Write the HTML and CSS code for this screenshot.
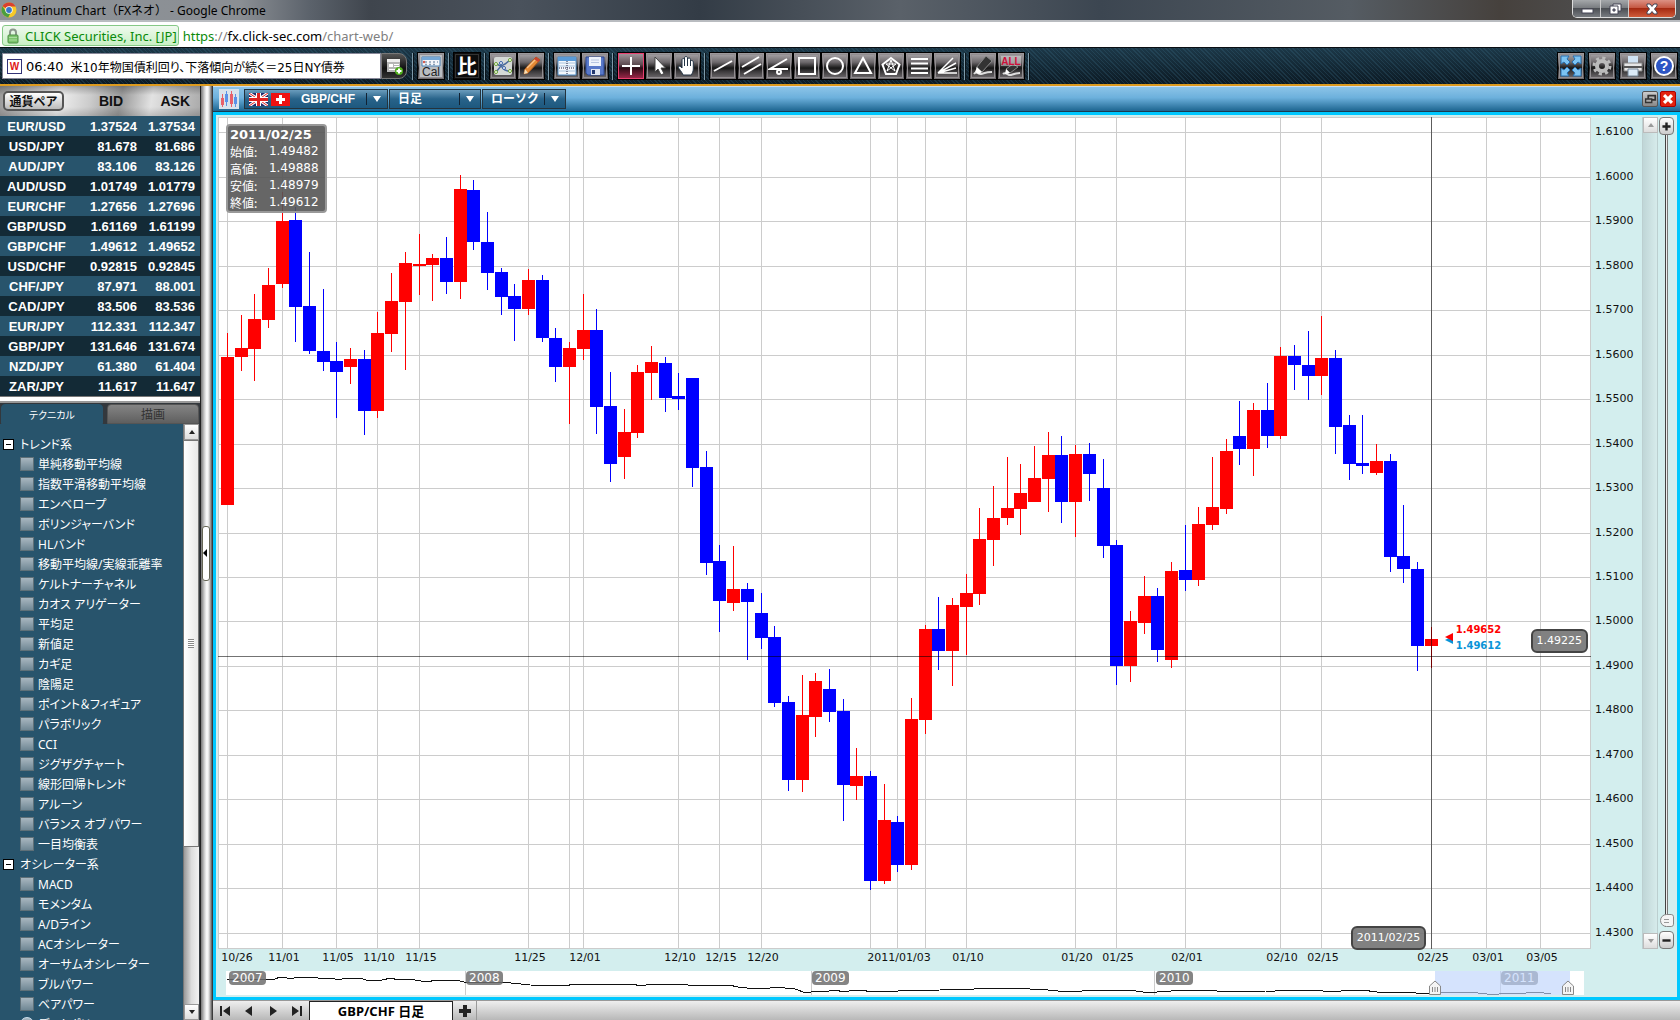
FILE: index.html
```html
<!DOCTYPE html>
<html lang="ja">
<head>
    <meta charset="UTF-8">
    <meta name="viewport" content="width=device-width, initial-scale=1.0">
    <title>Platinum Chart（FXネオ）</title>
    <link rel="stylesheet" href="styles.css">
</head>
<body>
    <header class="titlebar">
        <svg class="logo" viewBox="0 0 16 16">
            <circle cx="8" cy="8" r="7.5" fill="#f6c928"/>
            <path d="M8 8 1.500 4.200A7.500 7.500 0 0 1 14.700 4.600L8 4.500z" fill="#d9402f"/>
            <path d="M1.500 4.200A7.500 7.500 0 0 0 7.200 15.400L9.500 11 5 9.500z" fill="#4a9e3f"/>
            <circle cx="8" cy="8" r="3.700" fill="#fff"/>
            <circle cx="8" cy="8" r="2.900" fill="#3a78c8"/>
        </svg>
        <h1 class="title">Platinum Chart（FXネオ） - Google Chrome</h1>
        <div class="window-buttons">
            <button aria-label="最小化"><svg viewBox="0 0 14 12"><rect x="2" y="6" width="11" height="4" fill="#fff" stroke="#445"/></svg></button>
            <button aria-label="元に戻す"><svg viewBox="0 0 14 12"><path d="M5 1h8v7h-8z" fill="#fff" stroke="#445"/><path d="M2 3h8v8H2z" fill="#fff" stroke="#445"/><path d="M5 6h2v2H5z" fill="#889" stroke="#445"/></svg></button>
            <button class="win-close" aria-label="閉じる"><svg viewBox="0 0 14 12"><path d="M2 1h3l2 2.500L9 1h3v2L9.500 6 12 9v2H9L7 8.500 5 11H2V9l2.500-3L2 3z" fill="#fff" stroke="#445"/></svg></button>
        </div>
    </header>

    <div class="address">
        <span class="cert">
            <svg viewBox="0 0 12 16"><path d="M3 8V4.500a3 3 0 0 1 6 0V8" fill="none" stroke="#8b978b" stroke-width="2"/><rect x="1" y="7" width="10" height="8" rx="1" fill="#7cc46c" stroke="#4d8f45"/><path d="M2 9.500h8M2 12h8" stroke="#a9dd9e"/></svg>
            CLICK Securities, Inc. [JP]
        </span>
        <span class="url"><span class="scheme">https</span>://<b>fx.click-sec.com</b>/chart-web/</span>
    </div>

    <div class="toolbar">
        <a class="news" href="#"><span class="news-mark">W</span><span class="news-time">06:40</span><span class="news-text">米10年物国債利回り、下落傾向が続く＝25日NY債券</span></a>
        <button class="news-more" aria-label="ニュース一覧">
            <svg viewBox="0 0 20 20"><path d="M3 3h13v13H3z" fill="#b5b5b5"/><path d="M3 3h13v3H3z" fill="#eee"/><path d="M5 8h4v3H5z" fill="#fff"/><path d="M10 8.500h5M10 10.500h5M5 13.500h6" stroke="#fff"/><circle cx="15" cy="15" r="4" fill="#4fae1c"/><path d="M12.500 15h5M15 12.500v5" stroke="#fff" stroke-width="2"/></svg>
        </button>
        <i class="sep sep-first"></i>
        <button class="tool" aria-label="カレンダー"><svg viewBox="0 0 24 24"><rect x="1" y="1" width="22" height="22" fill="#b9bdc1"/><path d="M3 3h18v9H3z" fill="#f5f7fa" stroke="#4d82b5"/><path d="M3 3h18v3H3z" fill="#76a8d6"/><path d="M6 8h2M10 8h2M14 8h2M18 8h1M6 10.500h2M10 10.500h2M14 10.500h2" stroke="#8a9fb5" stroke-width="1.500"/><circle cx="5" cy="8" r="1.200" fill="#d65b4c"/><text x="3" y="22" class="cal-text">Cal</text></svg></button>
        <i class="sep"></i>
        <button class="tool tool-hi" aria-label="比較">比</button>
        <i class="sep"></i>
        <button class="tool" aria-label="インジケーター"><svg viewBox="0 0 24 24"><rect x="3" y="3" width="18" height="18" rx="2" fill="#d5d9d6"/><path d="M5 10l5 2 4 4 6 2M5 18l5-6 4-2 5-4" fill="none" stroke="#4b6b9c" stroke-width="1.500"/><g fill="#fff" stroke="#6aa22c"><circle cx="5" cy="10" r="1.500"/><circle cx="19" cy="6" r="1.500"/><circle cx="5" cy="18" r="1.500"/><circle cx="19" cy="17" r="1.500"/></g><g fill="#fff" stroke="#3460a8"><circle cx="10" cy="9" r="1.500"/><circle cx="13" cy="14" r="1.500"/></g></svg></button>
        <button class="tool" aria-label="鉛筆"><svg viewBox="0 0 24 24"><path d="M17 3l4 3-12 13-4 1 1-5z" fill="#e58a35" stroke="#a9591d"/><path d="M8 14L17 5" stroke="#f9c48a" stroke-width="1.500"/><path d="M17 3l4 3-2 2-4-3z" fill="#c94432"/><path d="M6 15l3 4-4 1z" fill="#f4dfb8"/></svg></button>
        <i class="sep"></i>
        <button class="tool" aria-label="レイアウト"><svg viewBox="0 0 24 24"><path d="M3 3h18v18H3z" fill="#f3f7fb" stroke="#4b8ac4"/><path d="M3 3h18v4H3z" fill="#5a9bd8"/><path d="M3 9h18M3 12h18M3 17h18" stroke="#a9c4de"/><path d="M12 7v14M4 14h16" stroke="#224" stroke-dasharray="1 1"/></svg></button>
        <button class="tool" aria-label="保存"><svg viewBox="0 0 24 24"><path d="M3 3h18v18H5l-2-2z" fill="#5878c8" stroke="#2e4a96"/><path d="M6 3h12v9H6z" fill="#eef3fb"/><path d="M8 6h8M8 8.500h8" stroke="#b7c6e2"/><path d="M8 15h9v6H8z" fill="#dfe5f1"/><path d="M9 16h3v4H9z" fill="#23386f"/></svg></button>
        <i class="sep"></i>
        <button class="tool active" aria-label="十字カーソル"><svg viewBox="0 0 24 24"><path d="M12 3v18M3 12h18" stroke="#fff" stroke-width="2"/></svg></button>
        <button class="tool" aria-label="選択"><svg viewBox="0 0 24 24"><path d="M8 3v15l3-3 3 6 3-1.500-3-5.500h4.500z" fill="#fff" stroke="#444"/></svg></button>
        <button class="tool" aria-label="移動"><svg viewBox="0 0 24 24"><path d="M8 21c-1-3-4-6-5-8 1-1.500 2.500-1 4 1V6c0-2 2.500-2 2.500 0V4c0-2 3-2 3 0v1c.5-1.500 3-1.500 3 .5V7c1-1 2.800-.5 2.800 1v7c0 3-1.300 4-1.800 6z" fill="#fff" stroke="#234"/><path d="M9.500 6v6M12.500 5v7M15.500 7v5" stroke="#234"/></svg></button>
        <i class="sep"></i>
        <button class="tool" aria-label="直線"><svg class="line" viewBox="0 0 24 24"><path d="M3 17L21 7"/></svg></button>
        <button class="tool" aria-label="平行線"><svg class="line" viewBox="0 0 24 24"><path d="M3 13L20 3M5 20L22 10"/></svg></button>
        <button class="tool" aria-label="角度線"><svg class="line" viewBox="0 0 24 24"><path d="M20 5L3 15h18"/><circle cx="12" cy="18" r="2"/></svg></button>
        <button class="tool" aria-label="四角形"><svg class="line" viewBox="0 0 24 24"><rect x="4" y="4" width="16" height="16"/></svg></button>
        <button class="tool" aria-label="円"><svg class="line" viewBox="0 0 24 24"><circle cx="12" cy="12" r="8"/></svg></button>
        <button class="tool" aria-label="三角形"><svg class="line" viewBox="0 0 24 24"><path d="M12 4l8 15H4z"/></svg></button>
        <button class="tool" aria-label="五角形"><svg class="line thin" viewBox="0 0 24 24"><path d="M12 4l8.500 6.500-3.500 9.500H7L3.500 10.500z" stroke-width="2"/><path d="M12 6l4 11-9-7h10l-9 7z"/></svg></button>
        <button class="tool" aria-label="リトレースメント"><svg class="line" viewBox="0 0 24 24"><path d="M4 5h17M4 9.500h17M4 14.500h17M4 19h17"/></svg></button>
        <button class="tool" aria-label="ファン"><svg class="line thin" viewBox="0 0 24 24"><path d="M3 19L18 4M3 19l18-10M3 19l18-5M3 19h19" stroke-width="1.500"/></svg></button>
        <i class="sep"></i>
        <button class="tool" aria-label="消しゴム"><svg viewBox="0 0 24 24"><path d="M3 20c3-4 4 1 7 0 4-1 5-2 11-2" fill="none" stroke="#ddd" stroke-width="2"/><path d="M15 2l6 5-10 11-6-4z" fill="#333" stroke="#888"/><path d="M6 13l5 5-3 2-4-2z" fill="#fff"/></svg></button>
        <button class="tool" aria-label="すべて消去"><svg viewBox="0 0 24 24"><path d="M4 20c3-3 5 2 8 1 4-1 5-2 9-2" fill="none" stroke="#ddd" stroke-width="2"/><path d="M14 10l5 3-8 6-4-4z" fill="#333" stroke="#888"/><path d="M7 15l4 4-5 1z" fill="#fff"/><rect x="2" y="2" width="20" height="10" fill="#ddd" opacity=".5"/><text x="12" y="11" class="all-text">ALL</text></svg></button>
        <i class="sep"></i>
        <div class="toolbar-right">
            <button class="tool" aria-label="全画面"><svg viewBox="0 0 24 24"><g fill="#7cc3f2" stroke="#2a70ae"><path d="M2 2h8L8 5l3 3-3 3-3-3-3 2z"/><path d="M22 2h-8l2 3-3 3 3 3 3-3 3 2z"/><path d="M2 22h8l-2-3 3-3-3-3-3 3-3-2z"/><path d="M22 22h-8l2-3-3-3 3-3 3 3 3-2z"/></g></svg></button>
            <button class="tool" aria-label="設定"><svg viewBox="0 0 24 24"><circle cx="12" cy="12" r="8" fill="none" stroke="#bbb" stroke-width="3" stroke-dasharray="3.140 3.140"/><circle cx="12" cy="12" r="5" fill="none" stroke="#bbb" stroke-width="4"/></svg></button>
            <button class="tool" aria-label="印刷"><svg viewBox="0 0 24 24"><path d="M7 2h10v8H7z" fill="#cfe3f5"/><path d="M3 9h18v8H3z" fill="#e6e6e6" stroke="#888"/><path d="M3 13h18" stroke="#555" stroke-width="2"/><path d="M7 15h10v7H7z" fill="#dcebf8" stroke="#789"/></svg></button>
            <button class="tool" aria-label="ヘルプ"><svg viewBox="0 0 24 24"><circle cx="12" cy="12" r="9" fill="#2d55c4" stroke="#fff" stroke-width="2"/><text x="12" y="17" class="help-text">?</text></svg></button>
        </div>
    </div>

    <main class="main">
        <aside class="sidebar">
            <table class="rates">
                <thead>
                    <tr><th><button class="pair-btn">通貨ペア</button></th><th>BID</th><th>ASK</th></tr>
                </thead>
                <tbody>
                    <tr><td>EUR/USD</td><td>1.37524</td><td>1.37534</td></tr>
                    <tr><td>USD/JPY</td><td>81.678</td><td>81.686</td></tr>
                    <tr><td>AUD/JPY</td><td>83.106</td><td>83.126</td></tr>
                    <tr><td>AUD/USD</td><td>1.01749</td><td>1.01779</td></tr>
                    <tr><td>EUR/CHF</td><td>1.27656</td><td>1.27696</td></tr>
                    <tr><td>GBP/USD</td><td>1.61169</td><td>1.61199</td></tr>
                    <tr><td>GBP/CHF</td><td>1.49612</td><td>1.49652</td></tr>
                    <tr><td>USD/CHF</td><td>0.92815</td><td>0.92845</td></tr>
                    <tr><td>CHF/JPY</td><td>87.971</td><td>88.001</td></tr>
                    <tr><td>CAD/JPY</td><td>83.506</td><td>83.536</td></tr>
                    <tr><td>EUR/JPY</td><td>112.331</td><td>112.347</td></tr>
                    <tr><td>GBP/JPY</td><td>131.646</td><td>131.674</td></tr>
                    <tr><td>NZD/JPY</td><td>61.380</td><td>61.404</td></tr>
                    <tr><td>ZAR/JPY</td><td>11.617</td><td>11.647</td></tr>
                </tbody>
            </table>
            <div class="divider"></div>
            <div class="side-tabs">
                <button class="side-tab selected">テクニカル</button>
                <button class="side-tab">描画</button>
            </div>
            <div class="tree">
                <div class="tree-list">
                    <div class="group"><button class="fold" aria-label="折りたたむ"></button>トレンド系</div>
                    <label><input type="checkbox">単純移動平均線</label>
                    <label><input type="checkbox">指数平滑移動平均線</label>
                    <label><input type="checkbox">エンベロープ</label>
                    <label><input type="checkbox">ボリンジャーバンド</label>
                    <label><input type="checkbox">HLバンド</label>
                    <label><input type="checkbox">移動平均線/実線乖離率</label>
                    <label><input type="checkbox">ケルトナーチャネル</label>
                    <label><input type="checkbox">カオス アリゲーター</label>
                    <label><input type="checkbox">平均足</label>
                    <label><input type="checkbox">新値足</label>
                    <label><input type="checkbox">カギ足</label>
                    <label><input type="checkbox">陰陽足</label>
                    <label><input type="checkbox">ポイント＆フィギュア</label>
                    <label><input type="checkbox">パラボリック</label>
                    <label><input type="checkbox">CCI</label>
                    <label><input type="checkbox">ジグザグチャート</label>
                    <label><input type="checkbox">線形回帰トレンド</label>
                    <label><input type="checkbox">アルーン</label>
                    <label><input type="checkbox">バランス オブ パワー</label>
                    <label><input type="checkbox">一目均衡表</label>
                    <div class="group"><button class="fold" aria-label="折りたたむ"></button>オシレーター系</div>
                    <label><input type="checkbox">MACD</label>
                    <label><input type="checkbox">モメンタム</label>
                    <label><input type="checkbox">A/Dライン</label>
                    <label><input type="checkbox">ACオシレーター</label>
                    <label><input type="checkbox">オーサムオシレーター</label>
                    <label><input type="checkbox">ブルパワー</label>
                    <label><input type="checkbox">ベアパワー</label>
                    <label class="orb-row"><input type="checkbox">ディナポリ</label>
                </div>
                <div class="scroll">
                    <button class="scroll-btn up" aria-label="上へ"></button>
                    <div class="scroll-thumb"><i></i></div>
                    <div class="scroll-track"></div>
                    <button class="scroll-btn down" aria-label="下へ"></button>
                </div>
            </div>
        </aside>

        <div class="splitter"><button class="splitter-btn" aria-label="サイドバーを隠す"></button></div>

        <section class="chart-panel">
            <div class="chart-head">
                <svg class="candle-icon" viewBox="0 0 20 20"><rect width="20" height="20" fill="#d9e3ec"/><g fill="#e8606a"><path d="M2 9h3v7H2zM3 5h1v13H3zM11 5h3v10h-3zM12 2h1v16h-1z"/></g><g fill="#5a92e8"><path d="M6 5h3v8H6zM7 2h1v15H7zM15 8h3v7h-3zM16 5h1v13h-1z"/></g></svg>
                <div class="combo pair">
                    <svg class="flag" viewBox="0 0 19 13"><path fill="#1f2a6b" d="M0 0h19v13H0z"/><path d="M0 0l19 13M19 0L0 13" stroke="#fff" stroke-width="3"/><path d="M0 0l19 13M19 0L0 13" stroke="#d22"/><path d="M9.500 0v13M0 6.500h19" stroke="#fff" stroke-width="5"/><path d="M9.500 0v13M0 6.500h19" stroke="#d22" stroke-width="3"/></svg>
                    <svg class="flag" viewBox="0 0 19 13"><path fill="#e11" d="M0 0h19v13H0z"/><path d="M9.500 2v9M5 6.500h9" stroke="#fff" stroke-width="3"/></svg>
                    <select aria-label="通貨ペア"><option>GBP/CHF</option></select>
                </div>
                <div class="combo term"><select aria-label="足種"><option>日足</option></select></div>
                <div class="combo style"><select aria-label="チャート形式"><option>ローソク</option></select></div>
                <div class="panel-buttons">
                    <button class="restore" aria-label="元のサイズ"><svg viewBox="0 0 16 16"><path d="M6 4h8v5H6z" fill="none" stroke="#333" stroke-width="2"/><path d="M3 8h7v4H3z" fill="#aaa" stroke="#333" stroke-width="1.500"/></svg></button>
                    <button class="close" aria-label="チャートを閉じる"><svg viewBox="0 0 16 16"><path d="M3.500 3.500l9 9M12.500 3.500l-9 9" stroke="#fff" stroke-width="3.500"/></svg></button>
                </div>
            </div>

            <div class="chart-body">
                <div class="plot">
                    <svg id="chart" class="chart-svg" viewBox="218 117 1373 832" preserveAspectRatio="none"></svg>
                    <dl class="ohlc">
                        <dt class="ohlc-date">2011/02/25</dt>
                        <dt>始値:</dt><dd>1.49482</dd>
                        <dt>高値:</dt><dd>1.49888</dd>
                        <dt>安値:</dt><dd>1.48979</dd>
                        <dt>終値:</dt><dd>1.49612</dd>
                    </dl>
                    <div class="last-price"><span class="ask">1.49652</span><span class="bid">1.49612</span></div>
                    <span class="badge price-badge">1.49225</span>
                    <span class="badge date-badge">2011/02/25</span>
                </div>
                <div id="yAxis" class="y-axis"></div>
                <div class="scroll light">
                    <button class="scroll-btn up" aria-label="上へ"></button>
                    <div class="scroll-track"></div>
                    <button class="scroll-btn down" aria-label="下へ"></button>
                </div>
                <div class="zoom">
                    <button class="zoom-btn" aria-label="拡大"><svg viewBox="0 0 16 16"><path d="M8 3v10M3 8h10" stroke="#222" stroke-width="3"/></svg></button>
                    <input type="range" min="0" max="100" value="0" aria-label="ズーム">
                    <button class="zoom-btn" aria-label="縮小"><svg viewBox="0 0 16 16"><path d="M3 8h10" stroke="#222" stroke-width="3"/></svg></button>
                </div>
                <div id="xAxis" class="x-axis"></div>
                <div id="overview" class="overview">
                    <svg class="overview-svg" viewBox="226 971 1358 24" preserveAspectRatio="none">
                        <path d="M465.500 971v24M811.500 971v24M1154.500 971v24M1500.500 971v24" stroke="#ccc" fill="none"/>
                        <polyline class="history" points="227,979 275,979 280,977 287,978 294,978 311,977 318,978 332,978 338,980 346,978 363,979 366,980 382,980 391,978 398,980 403,979 410,979 415,980 427,982 436,980 460,981 464,982 493,983 502,982 530,985 566,986 573,984 587,984 596,985 611,984 625,985 632,984 641,986 651,984 681,984 695,986 724,985 729,985 738,987 747,988 762,989 778,987 785,988 795,989 806,993 816,991 823,992 835,990 844,992 854,990 861,990 872,992 882,991 889,992 898,991 940,990 968,989 974,989 978,988 994,989 1011,988 1048,990 1067,992 1082,991 1091,990 1119,991 1129,990 1143,992 1157,992 1185,990 1204,990 1230,992 1266,991 1275,991 1287,990 1299,991 1313,990 1332,992 1341,991 1362,990 1377,992 1407,992 1416,993 1428,994 1454,992 1478,993 1487,994 1499,994 1506,993 1518,994 1535,992 1544,993 1551,993"/>
                    </svg>
                    <i class="range-fill"></i>
                </div>
            </div>

            <div class="bottom-bar">
                <button class="nav" aria-label="最初"><svg viewBox="0 0 12 12"><path d="M1 1h2v10H1zM11 1v10L4 6z"/></svg></button>
                <button class="nav" aria-label="前へ"><svg viewBox="0 0 12 12"><path d="M9 1v10L2 6z"/></svg></button>
                <button class="nav" aria-label="次へ"><svg viewBox="0 0 12 12"><path d="M3 1v10l7-5z"/></svg></button>
                <button class="nav" aria-label="最後"><svg viewBox="0 0 12 12"><path d="M9 1h2v10H9zM1 1v10l7-5z"/></svg></button>
                <button class="chart-tab">GBP/CHF 日足</button>
                <button class="add-tab" aria-label="追加"><svg viewBox="0 0 12 12"><path d="M6 0v12M0 6h12" stroke="#222" stroke-width="4"/></svg></button>
            </div>
        </section>
    </main>

    <script src="chart.js"></script>
</body>
</html>
```
FILE: styles.css
```css
* {
    box-sizing: border-box;
}

body {
    display: flex;
    flex-direction: column;
    height: 100vh;
    margin: 0;
    overflow: hidden;
    font-family: "Noto Sans", "Noto Sans CJK JP", sans-serif;
    font-size: 12px;
    background-color: #28546c;
}

button {
    padding: 0;
    border: none;
    background: none;
    font: inherit;
    cursor: pointer;
}

svg {
    display: block;
}

/* browser window */
.titlebar {
    display: flex;
    align-items: center;
    gap: 4px;
    height: 22px;
    padding-left: 1px;
    border-bottom: 2px solid #b9bcc0;
    background: linear-gradient(to right, #8d9297 0, #8b8f94 240px, #5b626b 310px, #3f454d 370px, #4a525c 520px, #333c46 700px, #5a6169 900px, #3c4651 1100px, #555c63 1350px, #46413d 1500px, #55585c);
}

.logo {
    width: 16px;
    height: 16px;
}

.title {
    flex: 1;
    margin: 0;
    font-size: 12px;
    font-weight: normal;
    color: #000;
}

.window-buttons {
    display: flex;
    align-self: flex-start;
    height: 18px;
    margin-right: 4px;
    border: 1px solid #ddd;
    border-top: none;
    border-radius: 0 0 5px 5px;
    overflow: hidden;
}

.window-buttons button {
    width: 28px;
    border-right: 1px solid #ccc;
    background: linear-gradient(#a4a7aa, #76797d 50%, #4c4f54 50%, #777b80);
}

.window-buttons .win-close {
    width: 46px;
    border-right: none;
    background: linear-gradient(#dc9184, #c3523b 50%, #a52a12 50%, #cf5b3a);
}

.window-buttons svg {
    width: 14px;
    height: 12px;
    margin: 0 auto;
}

.address {
    display: flex;
    align-items: center;
    gap: 4px;
    height: 25px;
    padding: 2px 2px 0;
    background-color: #fff;
    font-size: 13px;
}

.cert {
    display: flex;
    align-items: center;
    gap: 6px;
    height: 21px;
    padding: 0 1px 0 4px;
    border: 1px solid #86c986;
    border-radius: 3px;
    background: linear-gradient(#f0faef, #c9f0c5);
    color: #0a8a0a;
}

.cert svg {
    width: 12px;
    height: 16px;
}

.url {
    color: #808080;
}

.url .scheme {
    color: #0a8a0a;
}

.url b {
    font-weight: normal;
    color: #000;
}

/* toolbar */
.toolbar {
    display: flex;
    align-items: center;
    height: 39px;
    padding: 0 2px;
    border-top: 1px solid #0a0f14;
    border-bottom: 2px solid #dc9a1e;
    background-color: #122733;
    background-image: repeating-linear-gradient(45deg, rgba(60, 110, 135, 0.25) 0 1px, transparent 1px 3px), linear-gradient(#1c3848, #0c1a24);
}

.news {
    display: flex;
    align-items: center;
    width: 379px;
    height: 26px;
    padding-left: 4px;
    border: 1px solid #889;
    background-color: #fff;
    color: #000;
    text-decoration: none;
    white-space: nowrap;
    font-feature-settings: "palt";
}

.news-mark {
    width: 15px;
    height: 15px;
    margin-right: 4px;
    border: 1px solid #337;
    color: #e01818;
    font: bold 10px/13px "Liberation Sans", sans-serif;
    text-align: center;
}

.news-time {
    margin-right: 7px;
    font: 13px "DejaVu Sans", sans-serif;
}

.news-text {
    font-family: "DejaVu Sans", "Noto Sans CJK JP", sans-serif;
}

.news-more {
    width: 26px;
    height: 26px;
    padding: 2px;
    border: 1px solid #777;
    border-radius: 0 8px 8px 0;
    background: linear-gradient(#555, #111 60%, #333);
}

.sep {
    flex: none;
    width: 2px;
    height: 27px;
    margin: 0 3px;
    border-left: 1px solid #7d9aaa;
    background-color: #0a141a;
}

.sep-first {
    margin-left: 5px;
}

.tool {
    flex: none;
    width: 28px;
    height: 28px;
    border: 1px solid #000;
    outline: 1px solid #918d90;
    outline-offset: -3px;
    background: linear-gradient(#9c989b 10%, #6e6a6d 35%, #171717 58%, #3a383a 70%, #757174);
}

.tool svg {
    width: 24px;
    height: 24px;
    margin: 1px;
}

.tool.active {
    outline: 1px solid #e93f70;
    outline-offset: -2px;
    background: linear-gradient(#a59a9f, #5c4a50 45%, #2c0c16 58%, #a3284c);
}

.tool-hi {
    background: #0d0d0d;
    outline-color: #333;
    color: #fff;
    font-family: "Noto Sans CJK JP", sans-serif;
    font-size: 20px;
    font-weight: bold;
    line-height: 24px;
}

.line {
    fill: none;
    stroke: #fff;
    stroke-width: 2;
}

.line.thin {
    stroke-width: 1;
}

.cal-text {
    font: 12px "Liberation Sans", sans-serif;
    fill: #222;
}

.all-text {
    font: bold 10px "Liberation Sans", sans-serif;
    fill: #d0103a;
    text-anchor: middle;
}

.help-text {
    font: bold 14px "Liberation Sans", sans-serif;
    fill: #fff;
    text-anchor: middle;
}

.toolbar-right {
    display: flex;
    gap: 3px;
    margin-left: auto;
}

/* left side */
.main {
    display: flex;
    flex: 1;
    min-height: 0;
}

.sidebar {
    display: flex;
    flex-direction: column;
    width: 200px;
    background-color: #33383d;
}

.rates {
    width: 100%;
    border-collapse: collapse;
    table-layout: fixed;
    font: bold 13px "Liberation Sans", Arial, sans-serif;
    color: #fff;
}

.rates thead tr {
    height: 30px;
    background: linear-gradient(rgba(0, 0, 0, 0.25), transparent 30%, transparent 70%, rgba(0, 0, 0, 0.15)), linear-gradient(100deg, #999, #eee 30%, #ccc 45%, #999 60%, #e2e2e2 75%, #aaa);
    color: #111;
    font-size: 14px;
}

.rates th,
.rates td {
    padding: 0;
    text-align: right;
}

.rates th:nth-child(2) {
    padding-right: 14px;
}

.rates th:first-child {
    width: 73px;
    text-align: left;
}

.rates th:last-child {
    width: 63px;
    padding-right: 10px;
}

.rates td:first-child {
    text-align: center;
}

.rates td:last-child {
    padding-right: 5px;
}

.rates tbody tr {
    height: 20px;
    background-color: #132a36;
}

.rates tbody tr:nth-child(odd) {
    background-color: #28546c;
}

.pair-btn {
    width: 61px;
    height: 20px;
    margin-left: 3px;
    border: 2px solid #555;
    border-radius: 5px;
    background: linear-gradient(#fff, #bbb);
    font: bold 12px/14px "Noto Sans CJK JP", sans-serif;
    color: #111;
}

.divider {
    height: 7px;
    border-top: 1px solid #777;
    border-bottom: 2px solid #999;
    background-color: #fff;
}

.side-tabs {
    display: flex;
    gap: 4px;
    padding: 1px 1px 0;
}

.side-tab {
    flex: 1;
    height: 20px;
    border: 1px solid #555;
    border-radius: 4px 4px 0 0;
    background: linear-gradient(#848484, #5f5f5f);
    color: #333;
}

.side-tab.selected {
    flex: none;
    width: 102px;
    border-color: #28546c;
    background: #28546c;
    color: #fff;
    font-size: 10px;
    font-feature-settings: "palt";
}

.tree {
    display: flex;
    flex: 1;
    min-height: 0;
    margin-right: 1px;
    background-color: #28546c;
    color: #fff;
}

.tree-list {
    flex: 1;
    padding-top: 10px;
    overflow: hidden;
    font-feature-settings: "palt";
}

.tree-list label,
.group {
    display: flex;
    align-items: center;
    height: 20px;
    white-space: nowrap;
}

.tree-list label {
    gap: 4px;
    padding-left: 20px;
}

.group {
    gap: 6px;
    padding-left: 3px;
}

.tree-list input {
    appearance: none;
    width: 14px;
    height: 14px;
    margin: 0;
    border: 1px solid #5f7078;
    background: linear-gradient(#a9b7c0, #6f8794);
}

.tree-list .orb-row input {
    border-color: #cfe0ee;
    border-radius: 50%;
}

.fold {
    width: 11px;
    height: 11px;
    border: 1px solid #000;
    background: linear-gradient(#000, #000) center / 5px 1px no-repeat #fff;
}

.scroll {
    display: flex;
    flex-direction: column;
    width: 16px;
    border-left: 1px solid #777;
    background-color: #eee;
}

.scroll-btn {
    height: 16px;
    border: 1px solid #999;
    background: linear-gradient(#fff, #ddd);
}

.scroll-btn::after {
    content: "";
    display: block;
    width: 0;
    margin: 0 auto;
    border: 3px solid transparent;
}

.scroll-btn.up::after {
    border-top: none;
    border-bottom: 4px solid #222;
}

.scroll-btn.down::after {
    border-bottom: none;
    border-top: 4px solid #222;
}

.scroll-thumb {
    display: flex;
    align-items: center;
    justify-content: center;
    flex: 72;
    border: 1px solid #777;
    border-left: none;
    background: linear-gradient(to right, #fff, #e8e8e8);
}

.scroll-thumb i {
    width: 6px;
    height: 9px;
    background: repeating-linear-gradient(#888 0 1px, #fff 1px 2px);
}

.scroll-track {
    flex: 28;
    background: linear-gradient(to right, #999, #ddd 50%, #f2f2f2);
}

.scroll.light {
    border-color: #bccfd0;
    background-color: transparent;
}

.scroll.light .scroll-btn {
    border-color: #bbb;
}

.scroll.light .scroll-btn.up::after {
    border-bottom-color: #999;
}

.scroll.light .scroll-btn.down::after {
    border-top-color: #999;
}

.scroll.light .scroll-track {
    flex: 1;
    border-right: 1px solid #bccfd0;
    background: linear-gradient(to right, #c0d6d7, #d6ebeb);
}

.splitter {
    display: flex;
    align-items: center;
    width: 13px;
    background: linear-gradient(to right, #222 0 1px, #777 1px, #ddd 5px, #fff 7px, #ddd 9px, #555 12px, #222);
}

.splitter-btn {
    width: 8px;
    height: 55px;
    margin-left: 2px;
    border: 1px solid #665;
    border-radius: 3px;
    background-color: #fff;
}

.splitter-btn::after {
    content: "";
    display: block;
    width: 0;
    border: 4px solid transparent;
    border-left: none;
    border-right-color: #000;
}

/* chart panel */
.chart-panel {
    display: flex;
    flex: 1;
    flex-direction: column;
    min-width: 0;
}

.chart-head {
    display: flex;
    align-items: center;
    height: 26px;
    padding: 0 4px 0 6px;
    border-top: 1px solid #cde;
    border-bottom: 1px solid #1d3a4e;
    background: linear-gradient(#8cc4e8, #6cb0dc 45%, #1d6590);
}

.candle-icon {
    width: 20px;
    height: 20px;
    margin-right: 5px;
}

.combo {
    display: flex;
    align-items: center;
    gap: 3px;
    height: 20px;
    margin-right: 1px;
    padding-left: 4px;
    border: 1px solid #24333d;
    background: linear-gradient(#6a9cbc, #28638a 50%, #1d587e);
}

.combo.pair {
    width: 144px;
}

.combo.term {
    width: 92px;
}

.combo.style {
    width: 84px;
}

.combo select {
    flex: 1;
    align-self: stretch;
    min-width: 0;
    padding: 0 0 0 4px;
    border: none;
    appearance: none;
    background: linear-gradient(#123, #123) right 19px center / 1px 12px no-repeat;
    color: #fff;
    font: bold 12px "Liberation Sans", "Noto Sans CJK JP", sans-serif;
}

.combo.pair select {
    padding-left: 8px;
}

.combo::after {
    content: "";
    margin-right: 6px;
    margin-left: -16px;
    border: 4px solid transparent;
    border-top: 6px solid #fff;
    border-bottom: none;
    pointer-events: none;
}

.flag {
    width: 19px;
    height: 13px;
}

.panel-buttons {
    display: flex;
    gap: 2px;
    margin-left: auto;
}

.panel-buttons button {
    width: 16px;
    height: 16px;
    border: 1px solid #555;
    border-radius: 2px;
    background: linear-gradient(#ccc, #888);
}

.panel-buttons .close {
    border-color: #a00;
    background: #e3220f;
}

.chart-body {
    display: grid;
    flex: 1;
    grid-template-columns: 1fr 51px 16px 19px;
    grid-template-rows: 1fr 22px 24px;
    min-height: 0;
    padding: 2px 0 2px 2px;
    border: 3px solid #00c8ff;
    background-color: #d3eeee;
    font-family: "DejaVu Sans", Verdana, sans-serif;
    font-size: 11px;
}

.plot {
    position: relative;
    min-height: 0;
    background-color: #fff;
}

.chart-svg {
    position: absolute;
    width: 100%;
    height: 100%;
    shape-rendering: crispEdges;
}

.grid {
    fill: #ccc;
}

.up-candle {
    fill: #f00;
}

.down-candle {
    fill: #00f;
}

.cross {
    fill: #000;
    opacity: 0.55;
}

.ohlc {
    position: absolute;
    top: 7px;
    left: 8px;
    display: grid;
    grid-template-columns: auto auto;
    justify-content: space-between;
    width: 101px;
    margin: 0;
    padding: 0 4px 0 2px;
    border: 2px solid #999;
    border-radius: 4px;
    background-color: rgba(85, 85, 85, 0.9);
    color: #fff;
    font-size: 12px;
    line-height: 17px;
}

.ohlc dd {
    margin: 0;
}

.ohlc dt {
    font-family: "Noto Sans CJK JP", sans-serif;
}

.ohlc .ohlc-date {
    grid-column: span 2;
    font: bold 13px/17px "DejaVu Sans", sans-serif;
}

.last-price {
    position: absolute;
    top: 61%;
    left: 90%;
    display: flex;
    flex-direction: column;
    margin-top: -3px;
    padding-left: 2px;
    font-size: 10px;
    font-weight: bold;
    line-height: 16px;
}

.last-price::before,
.last-price::after {
    content: "";
    position: absolute;
    top: 11px;
    left: -9px;
    border: 4px solid transparent;
    border-left: none;
    border-right: 8px solid #f00;
}

.last-price::before {
    top: 14px;
    border-right-color: #0a94d8;
}

.ask {
    color: #f00;
}

.bid {
    color: #0a94d8;
}

.badge {
    position: absolute;
    height: 24px;
    padding: 0 4px;
    border: 2px solid #444;
    border-radius: 6px;
    background-color: rgba(115, 115, 115, 0.9);
    color: #fff;
    line-height: 19px;
}

.price-badge {
    top: 61%;
    right: 3px;
    margin-top: 4px;
}

.date-badge {
    right: 12%;
    bottom: -1px;
}

.y-axis,
.x-axis {
    position: relative;
    color: #111;
}

.y-axis span {
    position: absolute;
    left: 4px;
    line-height: 14px;
    transform: translateY(-50%);
}

.x-axis {
    grid-column: 1 / -1;
    grid-row: 2;
}

.x-axis span {
    position: absolute;
    top: 2px;
    line-height: 14px;
    white-space: nowrap;
    transform: translateX(-50%);
}

.zoom {
    display: flex;
    flex-direction: column;
    align-items: center;
    padding-right: 2px;
}

.zoom-btn {
    width: 15px;
    height: 18px;
    border: 1px solid #777;
    border-radius: 4px;
    background: linear-gradient(#fff, #ccc);
}

.zoom input {
    flex: 1;
    width: 14px;
    min-height: 0;
    margin: 0 0 4px;
    appearance: none;
    writing-mode: vertical-lr;
    direction: rtl;
    background: linear-gradient(to right, #444 1px, #eee 1px 2px, #777 2px) center / 3px 100% no-repeat;
}

.zoom input::-webkit-slider-thumb {
    appearance: none;
    width: 14px;
    height: 13px;
    border: 1px solid #888;
    border-radius: 7px 3px 3px 7px;
    background: repeating-linear-gradient(transparent 0 2px, #999 2px 3px) center / 5px 8px no-repeat #f4f4f4;
}

.overview {
    position: relative;
    grid-column: 1;
    margin: 0 7px 0 8px;
    background-color: #fff;
}

.overview-svg {
    width: 100%;
    height: 100%;
    shape-rendering: crispEdges;
}

.history {
    fill: none;
    stroke: #111;
}

.year {
    position: absolute;
    top: 0;
    padding: 0 3px;
    border-radius: 4px;
    background-color: rgba(110, 110, 110, 0.85);
    color: #fff;
    font-size: 12px;
    line-height: 14px;
}

.range-fill {
    position: absolute;
    inset: 0 1% 0 89%;
    background-color: rgba(190, 212, 252, 0.65);
    z-index: 1;
}

.handle {
    position: absolute;
    bottom: 0;
    width: 14px;
    height: 15px;
    margin-left: -7px;
    z-index: 2;
}

.handle path {
    fill: #f4f4f4;
    stroke: #888;
}

/* sheet tabs */
.bottom-bar {
    display: flex;
    height: 20px;
    border-top: 1px solid #999;
    background: linear-gradient(#efefef, #b8b8b8);
}

.nav {
    width: 24px;
}

.nav svg {
    width: 12px;
    height: 12px;
    margin: 0 auto;
    fill: #222;
}

.chart-tab {
    width: 144px;
    border: 1px solid #222;
    border-bottom: none;
    background-color: #fff;
    font: bold 13px/18px "Noto Sans", "Noto Sans CJK JP", sans-serif;
}

.add-tab {
    width: 24px;
    border-right: 1px solid #999;
}

.add-tab svg {
    width: 12px;
    height: 12px;
    margin: 0 auto;
}
```
FILE: chart.js
```js
const SVG_NS = 'http://www.w3.org/2000/svg';
const plot = { left: 218, top: 117, width: 1373, height: 832 };
const step = 13.68;

// [direction, high, body top, body bottom, low]
const candles = [
    ['u', 333, 357, 505, 505], ['u', 315, 348, 357, 371], ['u', 294, 319, 349, 381], ['u', 268, 285, 320, 328],
    ['u', 192, 221, 284, 288], ['d', 207, 220, 307, 342], ['d', 252, 306, 351, 354], ['d', 289, 351, 362, 371],
    ['d', 342, 361, 372, 418], ['u', 348, 359, 367, 384], ['d', 350, 359, 411, 435], ['u', 312, 333, 411, 418],
    ['u', 273, 301, 334, 352], ['u', 252, 263, 302, 370], ['u', 234, 264, 266, 295], ['u', 254, 258, 265, 301],
    ['d', 237, 258, 282, 294], ['u', 175, 189, 282, 299], ['d', 180, 190, 242, 250], ['d', 212, 242, 273, 290],
    ['d', 268, 272, 297, 315], ['d', 284, 296, 309, 341], ['u', 269, 280, 309, 315], ['d', 275, 280, 338, 342],
    ['d', 328, 338, 367, 382], ['u', 342, 348, 367, 424], ['u', 294, 330, 349, 360], ['d', 309, 330, 407, 434],
    ['d', 372, 406, 464, 482], ['u', 409, 432, 457, 479], ['u', 365, 372, 433, 438], ['u', 346, 362, 373, 400],
    ['d', 357, 363, 398, 412], ['d', 373, 396, 399, 410], ['d', 378, 378, 468, 487], ['d', 451, 467, 563, 575],
    ['d', 545, 561, 601, 632], ['u', 546, 589, 603, 611], ['d', 583, 589, 602, 660], ['d', 593, 613, 638, 649],
    ['d', 626, 637, 703, 707], ['d', 696, 702, 780, 791], ['u', 675, 715, 780, 792], ['u', 673, 681, 717, 737],
    ['d', 669, 689, 712, 722], ['d', 699, 711, 785, 821], ['u', 748, 776, 786, 800], ['d', 771, 776, 881, 890],
    ['u', 784, 820, 881, 884], ['d', 816, 822, 865, 872], ['u', 698, 719, 865, 870], ['u', 625, 629, 720, 734],
    ['d', 597, 629, 651, 670], ['u', 598, 605, 651, 686], ['u', 574, 593, 607, 655], ['u', 508, 539, 594, 605],
    ['u', 486, 518, 540, 566], ['u', 457, 508, 518, 525], ['u', 464, 493, 509, 535], ['u', 446, 478, 502, 502],
    ['u', 432, 455, 479, 512], ['d', 436, 455, 502, 523], ['u', 445, 454, 502, 537], ['d', 443, 454, 474, 501],
    ['d', 459, 488, 546, 558], ['d', 540, 545, 666, 685], ['u', 611, 621, 666, 682], ['u', 576, 596, 623, 634],
    ['d', 588, 596, 650, 662], ['u', 562, 571, 660, 668], ['d', 525, 570, 580, 591], ['u', 507, 524, 580, 586],
    ['u', 457, 507, 525, 530], ['u', 439, 451, 509, 514], ['d', 401, 436, 449, 465], ['u', 403, 410, 449, 476],
    ['d', 383, 410, 436, 448], ['u', 347, 356, 436, 439], ['d', 345, 356, 365, 390], ['d', 331, 365, 376, 400],
    ['u', 316, 358, 376, 395], ['d', 350, 358, 427, 454], ['d', 415, 425, 464, 480], ['d', 415, 463, 466, 474],
    ['u', 444, 461, 473, 475], ['d', 454, 461, 557, 572], ['d', 505, 556, 569, 583], ['d', 562, 569, 646, 671],
    ['u', 627, 639, 646, 668]
];

// candle index and the label under the grid line, if it has one
const dates = [
    [0, '10/26'], [4, '11/01'], [8, '11/05'], [11, '11/10'], [14, '11/15'], [22, '11/25'], [25, ''], [26, '12/01'],
    [33, '12/10'], [36, '12/15'], [39, '12/20'], [47, ''], [49, '2011/01/03'], [51, ''], [54, '01/10'],
    [62, '01/20'], [65, '01/25'], [70, '02/01'], [77, '02/10'], [80, '02/15'], [88, '02/25'], [92, '03/01'], [96, '03/05']
];

const chart = document.getElementById('chart');
const xAxis = document.getElementById('xAxis');
const yAxis = document.getElementById('yAxis');
const overview = document.getElementById('overview');

function rect(x, y, w, h, cls) {
    const el = document.createElementNS(SVG_NS, 'rect');
    el.setAttribute('x', x);
    el.setAttribute('y', y);
    el.setAttribute('width', w);
    el.setAttribute('height', h);
    el.setAttribute('class', cls);
    chart.appendChild(el);
}

function label(parent, text, prop, value, cls) {
    const el = document.createElement('span');
    el.textContent = text;
    el.style[prop] = value + '%';
    if (cls) el.className = cls;
    parent.appendChild(el);
}

function candleLeft(i) {
    return 221 + Math.round(step * i);
}

// price grid
for (let i = 0; i <= 18; i++) {
    const y = Math.round(132.3 + i * 44.47);
    rect(plot.left, y, plot.width, 1, 'grid');
    label(yAxis, (1.61 - i * 0.01).toFixed(4), 'top', (y - plot.top) / plot.height * 100);
}

// date grid
dates.forEach(function([i, text]) {
    const x = candleLeft(i) + 6;
    rect(x, plot.top, 1, plot.height, 'grid');
    if (text) {
        // keep the first label inside the panel
        const center = Math.max(x + 2, 237) - plot.left;
        label(xAxis, text, 'left', center / (plot.width + 86) * 100);
    }
});

// frame
rect(plot.left, plot.top, plot.width, 1, 'grid');
rect(plot.left, plot.top + plot.height - 1, plot.width, 1, 'grid');
rect(plot.left, plot.top, 1, plot.height, 'grid');
rect(plot.left + plot.width - 1, plot.top, 1, plot.height, 'grid');

candles.forEach(function([dir, high, top, bottom, low], i) {
    const x = candleLeft(i);
    const cls = dir === 'u' ? 'up-candle' : 'down-candle';
    rect(x + 6, high, 1, low - high, cls);
    rect(x, top, 13, bottom - top, cls);
});

// crosshair
rect(candleLeft(88) + 6, plot.top, 1, plot.height, 'cross');
rect(plot.left, 656, plot.width, 1, 'cross');

// overview years and range handles
[[2007, 229], [2008, 466], [2009, 812], [2010, 1156], [2011, 1501]].forEach(function([year, x]) {
    label(overview, year, 'left', (x - 226) / 1358 * 100, 'year');
});

[1435, 1568].forEach(function(x) {
    const handle = document.createElementNS(SVG_NS, 'svg');
    handle.setAttribute('class', 'handle');
    handle.setAttribute('viewBox', '0 0 14 15');
    handle.innerHTML = '<path d="M7 1l5.500 5v8.500h-11V6z"/><path d="M4.500 7v5M7 7v5M9.500 7v5"/>';
    handle.style.left = (x - 226) / 1358 * 100 + '%';
    overview.appendChild(handle);
});
```
